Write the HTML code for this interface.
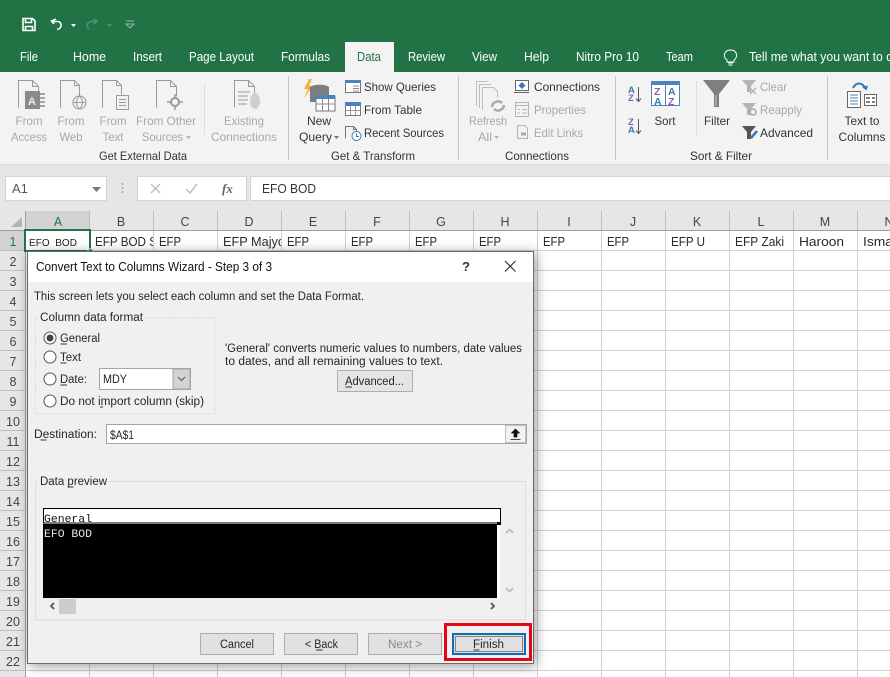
<!DOCTYPE html>
<html><head><meta charset="utf-8"><style>
html,body{margin:0;padding:0;background:#fff;width:890px;height:677px;overflow:hidden}
svg{display:block}
text{font-family:"Liberation Sans",sans-serif;font-size:12px;fill:#333;white-space:pre}
.tab{font-size:12.5px;fill:#fff}
.dis{fill:#a8a8a8}
.c{text-anchor:middle}
.h{fill:#444;font-size:12.5px}
.cell{font-size:12.5px;fill:#2a2a2a}
.d{fill:#262626;font-size:11.5px}
.ic{fill:none;stroke:#9a9a9a;stroke-width:1}
</style></head><body>
<svg width="890" height="677" viewBox="0 0 890 677" xmlns="http://www.w3.org/2000/svg">
<defs>
<filter id="sh" x="-10%" y="-10%" width="120%" height="120%"><feDropShadow dx="2" dy="2" stdDeviation="6" flood-color="#000" flood-opacity=".4"/></filter>
<clipPath id="cb"><rect x="90" y="231" width="63" height="19"/></clipPath>
<clipPath id="cd"><rect x="218" y="231" width="63" height="19"/></clipPath>
<clipPath id="gn"><rect x="43" y="510" width="454" height="12"/></clipPath>
</defs>

<!-- title and tabs -->
<rect width="890" height="72" fill="#217346"/>
<g fill="none" stroke="#fff" stroke-width="1.6">
<path d="M23 18.500h9.500l2.500 2.500v9.500H23z"/><path d="M25.500 18.500v4h6v-4M25.500 30.500v-4h7v4"/>
<path d="M54 24l-2.500-3 4.500-2M52 21.500h6c4 0 4.500 7.500-1 8"/>
</g>
<path d="M71 24h5l-2.500 3z" fill="#fff"/>
<path d="M94 24l3-3-4-2M96 21.500h-4c-3 0-5 2-5 4s1 3 2 4" fill="none" stroke="#4e9170" stroke-width="1.500"/>
<path d="M107 24h5l-2.500 3z" fill="#4e9170"/>
<path d="M126 21h8M126 24h8l-4 4z" fill="none" stroke="#8fb9a3" stroke-width="1"/>

<rect x="345" y="42" width="49" height="30" fill="#f3f3f3"/>
<text class="tab" x="20" y="61" textLength="18" lengthAdjust="spacingAndGlyphs">File</text>
<text class="tab" x="73" y="61" textLength="33" lengthAdjust="spacingAndGlyphs">Home</text>
<text class="tab" x="133" y="61" textLength="29" lengthAdjust="spacingAndGlyphs">Insert</text>
<text class="tab" x="189" y="61" textLength="65" lengthAdjust="spacingAndGlyphs">Page Layout</text>
<text class="tab" x="281" y="61" textLength="49" lengthAdjust="spacingAndGlyphs">Formulas</text>
<text class="tab" x="357" y="61" textLength="24" lengthAdjust="spacingAndGlyphs" style="fill:#217346">Data</text>
<text class="tab" x="408" y="61" textLength="37" lengthAdjust="spacingAndGlyphs">Review</text>
<text class="tab" x="472" y="61" textLength="25" lengthAdjust="spacingAndGlyphs">View</text>
<text class="tab" x="524" y="61" textLength="25" lengthAdjust="spacingAndGlyphs">Help</text>
<text class="tab" x="576" y="61" textLength="63" lengthAdjust="spacingAndGlyphs">Nitro Pro 10</text>
<text class="tab" x="666" y="61" textLength="27" lengthAdjust="spacingAndGlyphs">Team</text>
<path d="M728 63h5M728.500 65h4M727 60c-4.500-3-3-10 3.500-10s8 7 3.500 10v2h-7z" fill="none" stroke="#fff" stroke-width="1"/>
<text class="tab" x="749" y="61" textLength="144" lengthAdjust="spacingAndGlyphs">Tell me what you want to d</text>

<!-- ribbon -->
<rect y="72" width="890" height="92" fill="#f3f3f3"/>
<rect y="164" width="890" height="47" fill="#e6e6e6"/>
<rect y="164" width="890" height="1" fill="#dcdcdc"/>
<g fill="#c6c6c6">
<rect x="288" y="76" width="1" height="84"/><rect x="458" y="76" width="1" height="84"/>
<rect x="615" y="76" width="1" height="84"/><rect x="827" y="76" width="1" height="84"/>
<rect x="204" y="83" width="1" height="52" fill="#dedede"/><rect x="696" y="81" width="1" height="55" fill="#dedede"/>
</g>

<!-- ribbon icons: external data -->
<g class="ic">
<path d="M18.500 107.500V80.500h14l6 6v21"/><path d="M32.500 80.500v6h6"/>
<path d="M60.500 107.500V80.500h14l5 5v10"/><path d="M74.500 80.500v5h5"/><circle cx="79.500" cy="102.500" r="6.500"/><path d="M73 102.500h13M79.500 96c-4 4-4 9 0 13M79.500 96c4 4 4 9 0 13"/>
<path d="M102.500 107.500V80.500h14l5 5v9"/><path d="M116.500 80.500v5h5"/><rect x="116.500" y="95.500" width="12" height="14"/><path d="M119 99.500h7M119 102.500h7M119 105.500h7"/>
<path d="M156.500 107.500V80.500h14l6 6v10"/><path d="M170.500 80.500v6h6"/><circle cx="175" cy="102" r="4" stroke-width="2"/><path d="M175 94v4M175 106v4M167 102h4M179 102h4" stroke-width="1.500"/>
<path d="M234.500 107.500V80.500h14l6 6v8"/><path d="M248.500 80.500v6h6M238 92h12M238 96h10M238 100h10M238 104h9"/>
</g>
<rect x="25" y="91" width="15" height="18" fill="#8a8a8a"/><text x="28" y="105" style="font-size:11px;font-weight:bold;fill:#eee">A</text>
<path d="M40 94h5M40 98h5M40 102h5M40 106h5" stroke="#8a8a8a" stroke-width="1.500" fill="none"/>
<ellipse cx="255" cy="101" rx="5" ry="8" fill="#cfcfcf"/>

<text class="dis c" x="29" y="125" textLength="27" lengthAdjust="spacingAndGlyphs">From</text><text class="dis c" x="29" y="141" textLength="36" lengthAdjust="spacingAndGlyphs">Access</text>
<text class="dis c" x="71" y="125" textLength="27" lengthAdjust="spacingAndGlyphs">From</text><text class="dis c" x="71" y="141" textLength="23" lengthAdjust="spacingAndGlyphs">Web</text>
<text class="dis c" x="113" y="125" textLength="27" lengthAdjust="spacingAndGlyphs">From</text><text class="dis c" x="113" y="141" textLength="21" lengthAdjust="spacingAndGlyphs">Text</text>
<text class="dis c" x="166" y="125" textLength="60" lengthAdjust="spacingAndGlyphs">From Other</text><text class="dis" x="142" y="141" textLength="41" lengthAdjust="spacingAndGlyphs">Sources</text>
<text class="dis c" x="244" y="125" textLength="40" lengthAdjust="spacingAndGlyphs">Existing</text><text class="dis c" x="244" y="141" textLength="66" lengthAdjust="spacingAndGlyphs">Connections</text>
<path d="M186 136h5l-2.500 3z" fill="#b4b4b4"/>
<text x="99" y="160" textLength="88" lengthAdjust="spacingAndGlyphs">Get External Data</text>

<!-- get and transform -->
<path d="M309 79l-5 10h4l-4 9 9-12h-4l3-7z" fill="#f2b33d"/>
<path d="M310 87c3-3 16-3 19 0v15h-19z" fill="#7d7d7d"/>
<rect x="316" y="96" width="19" height="15" fill="#fff" stroke="#777"/>
<rect x="316" y="95" width="19" height="4" fill="#4f81bd"/>
<path d="M322.500 99v12M328.500 99v12M316 104h19" stroke="#888" fill="none"/>
<text class="c" x="319" y="125" textLength="24" lengthAdjust="spacingAndGlyphs">New</text>
<text x="299" y="141" textLength="33" lengthAdjust="spacingAndGlyphs">Query</text>
<path d="M334 136h5l-2.500 3z" fill="#777"/>
<rect x="345.500" y="80.500" width="15" height="12" fill="#fff" stroke="#777"/><rect x="345" y="80" width="16" height="3" fill="#4f81bd"/><path d="M353 86h6M353 88.500h6M353 91h6" stroke="#888"/>
<rect x="345.500" y="103.500" width="15" height="12" fill="#fff" stroke="#777"/><rect x="345" y="102" width="16" height="4" fill="#4f81bd"/><path d="M350.500 106v9M355.500 106v9M346 110.500h14" stroke="#999"/>
<path d="M345.500 138.500v-12h8l3 3v3M353.500 126.500v3h3" fill="none" stroke="#777"/><circle cx="356.500" cy="136" r="4.500" fill="#fff" stroke="#3a78b5"/><path d="M356.500 133.500v3h2.500" stroke="#3a78b5" fill="none"/>
<text x="364" y="91" textLength="72" lengthAdjust="spacingAndGlyphs">Show Queries</text>
<text x="364" y="114" textLength="58" lengthAdjust="spacingAndGlyphs">From Table</text>
<text x="364" y="137" textLength="80" lengthAdjust="spacingAndGlyphs">Recent Sources</text>
<text x="331" y="160" textLength="84" lengthAdjust="spacingAndGlyphs">Get &amp; Transform</text>

<!-- connections -->
<g class="ic" style="stroke:#bdbdbd">
<path d="M476.500 106V81.500h12M479.500 108V84.500h12M482.500 110V87.500h11l4 4v6"/>
</g>
<path d="M492 107a6 6 0 0 1 10-4M504 105a6 6 0 0 1-10 4" fill="none" stroke="#aaa" stroke-width="2.500"/>
<text class="dis c" x="488" y="125" textLength="38" lengthAdjust="spacingAndGlyphs">Refresh</text>
<text class="dis" x="478" y="141" textLength="14" lengthAdjust="spacingAndGlyphs">All</text>
<path d="M494 136h5l-2.500 3z" fill="#b4b4b4"/>
<rect x="515.500" y="80.500" width="13" height="10" fill="#fff" stroke="#666"/><path d="M514 92.500h15" stroke="#666"/><path d="M522 82l3.500 3.500-3.500 3.500-3.500-3.500z" fill="#3a78b5"/>
<rect x="515.500" y="102.500" width="13" height="14" fill="none" stroke="#b5b5b5"/><path d="M515 105.500h14M518 109.500h2M518 113h2M522 109.500h5M522 113h5" stroke="#b5b5b5"/>
<path d="M517.500 138.500v-13h7l3 3v10z" fill="none" stroke="#b5b5b5"/><path d="M521 134h5" stroke="#aaa" stroke-width="3"/>
<text x="534" y="91" textLength="66" lengthAdjust="spacingAndGlyphs">Connections</text>
<text class="dis" x="534" y="114" textLength="52" lengthAdjust="spacingAndGlyphs">Properties</text>
<text class="dis" x="534" y="137" textLength="49" lengthAdjust="spacingAndGlyphs">Edit Links</text>
<text x="505" y="160" textLength="64" lengthAdjust="spacingAndGlyphs">Connections</text>

<!-- sort -->
<g style="font-weight:bold">
<text x="628" y="93" style="font-size:9.500px;fill:#3a78b5">A</text><text x="628" y="101" style="font-size:9.500px;fill:#8e5ea8">Z</text>
<text x="628" y="125" style="font-size:9.500px;fill:#8e5ea8">Z</text><text x="628" y="133" style="font-size:9.500px;fill:#3a78b5">A</text>
</g>
<path d="M638.500 87v14M636 98.500l2.500 3 2.500-3M638.500 119v14M636 130.500l2.500 3 2.500-3" fill="none" stroke="#555"/>
<rect x="651.500" y="82.500" width="28" height="23" fill="#fff" stroke="#4f81bd"/><rect x="651" y="81" width="29" height="4" fill="#4f81bd"/><path d="M665.500 85v20" stroke="#4f81bd"/>
<g style="font-weight:bold">
<text x="654" y="95" style="font-size:10.500px;fill:#8e5ea8">Z</text><text x="654" y="105" style="font-size:10.500px;fill:#3a78b5">A</text>
<text x="668" y="95" style="font-size:10.500px;fill:#3a78b5">A</text><text x="668" y="105" style="font-size:10.500px;fill:#8e5ea8">Z</text>
</g>
<text class="c" x="665" y="125" textLength="21" lengthAdjust="spacingAndGlyphs">Sort</text>
<path d="M703 80h27l-11 14v13h-5V94z" fill="#7f7f7f"/><path d="M716 95v11" stroke="#b5b5b5" stroke-width="1.500"/>
<text class="c" x="717" y="125" textLength="26" lengthAdjust="spacingAndGlyphs">Filter</text>
<path d="M742 80h14l-5 6v6h-4v-6z" fill="#b4b4b4"/><path d="M750 88l6 6M756 88l-6 6" stroke="#b4b4b4" stroke-width="1.500"/>
<path d="M742 103h14l-5 6v6h-4v-6z" fill="#b4b4b4"/><circle cx="753" cy="112" r="3" fill="none" stroke="#a8a8a8" stroke-width="1.500"/>
<path d="M742 126h14l-5 6v7h-4v-7z" fill="#555"/><path d="M751 138l6-7" stroke="#3a78b5" stroke-width="2.500"/>
<text class="dis" x="760" y="91" textLength="27" lengthAdjust="spacingAndGlyphs">Clear</text>
<text class="dis" x="760" y="114" textLength="42" lengthAdjust="spacingAndGlyphs">Reapply</text>
<text x="760" y="137" textLength="53" lengthAdjust="spacingAndGlyphs">Advanced</text>
<text x="690" y="160" textLength="62" lengthAdjust="spacingAndGlyphs">Sort &amp; Filter</text>

<!-- text to columns -->
<rect x="847.500" y="91.500" width="13" height="16" fill="#fff" stroke="#666"/><path d="M850 95h8M850 98h8M850 101h8M850 104h8" stroke="#4f81bd"/>
<rect x="864.500" y="94.500" width="12" height="11" fill="#fff" stroke="#666"/><path d="M866 98h4M866 102h4M872 98h3M872 102h3" stroke="#555" stroke-width="1.500"/>
<path d="M853 88c3-6 9-6 12 0" fill="none" stroke="#3a78b5" stroke-width="2"/><path d="M862 87l4.500 3.500 1.500-5z" fill="#3a78b5"/>
<text class="c" x="862" y="125" textLength="35" lengthAdjust="spacingAndGlyphs">Text to</text>
<text class="c" x="862" y="141" textLength="47" lengthAdjust="spacingAndGlyphs">Columns</text>

<!-- formula bar -->
<rect x="5.500" y="176.500" width="101" height="24" fill="#fff" stroke="#d4d4d4"/>
<text x="12" y="193" style="font-size:13px;fill:#555">A1</text>
<path d="M92 187h9l-4.500 5z" fill="#777"/>
<path d="M122.500 183v2M122.500 187v2M122.500 191v2" stroke="#aaa" stroke-width="1.500"/>
<rect x="137.500" y="176.500" width="109" height="24" fill="#fff" stroke="#d4d4d4"/>
<path d="M151 184l9 9M160 184l-9 9" stroke="#bdbdbd" stroke-width="1.500"/>
<path d="M186 189l4 4 7-9" fill="none" stroke="#bdbdbd" stroke-width="1.500"/>
<text x="222" y="193" style="font-size:13px;font-style:italic;font-family:'Liberation Serif',serif;font-weight:bold;fill:#666">fx</text>
<rect x="250.500" y="176.500" width="650" height="24" fill="#fff" stroke="#d4d4d4"/>
<text x="262" y="193" textLength="54" lengthAdjust="spacingAndGlyphs" style="font-size:12.500px">EFO BOD</text>

<!-- headers and grid -->
<rect y="211" width="890" height="20" fill="#e6e6e6"/>
<rect y="231" width="25" height="446" fill="#e6e6e6"/>
<rect x="26" y="211" width="64" height="20" fill="#d2d2d2"/>
<rect y="231" width="25" height="20" fill="#d2d2d2"/>
<path d="M22 217v10H11z" fill="#b5b5b5"/>
<path d="M89.500 211v20M153.500 211v20M217.500 211v20M281.500 211v20M345.500 211v20M409.500 211v20M473.500 211v20M537.500 211v20M601.500 211v20M665.500 211v20M729.500 211v20M793.500 211v20M857.500 211v20" stroke="#bdbdbd"/>
<path d="M0 230.500h890M25.500 211v466" stroke="#9f9f9f"/>
<path d="M89.500 231V677M153.500 231V677M217.500 231V677M281.500 231V677M345.500 231V677M409.500 231V677M473.500 231V677M537.500 231V677M601.500 231V677M665.500 231V677M729.500 231V677M793.500 231V677M857.500 231V677M25 250.500H890M25 270.500H890M25 290.500H890M25 310.500H890M25 330.500H890M25 350.500H890M25 370.500H890M25 390.500H890M25 410.500H890M25 430.500H890M25 450.500H890M25 470.500H890M25 490.500H890M25 510.500H890M25 530.500H890M25 550.500H890M25 570.500H890M25 590.500H890M25 610.500H890M25 630.500H890M25 650.500H890M25 670.500H890" stroke="#d0d0d0"/>
<path d="M0 250.500h25M0 270.500h25M0 290.500h25M0 310.500h25M0 330.500h25M0 350.500h25M0 370.500h25M0 390.500h25M0 410.500h25M0 430.500h25M0 450.500h25M0 470.500h25M0 490.500h25M0 510.500h25M0 530.500h25M0 550.500h25M0 570.500h25M0 590.500h25M0 610.500h25M0 630.500h25M0 650.500h25M0 670.500h25" stroke="#bdbdbd"/>

<text class="h c" x="58" y="226" style="fill:#217346">A</text>
<text class="h c" x="121" y="226">B</text><text class="h c" x="185" y="226">C</text><text class="h c" x="249" y="226">D</text><text class="h c" x="313" y="226">E</text><text class="h c" x="377" y="226">F</text><text class="h c" x="441" y="226">G</text><text class="h c" x="505" y="226">H</text><text class="h c" x="569" y="226">I</text><text class="h c" x="633" y="226">J</text><text class="h c" x="697" y="226">K</text><text class="h c" x="761" y="226">L</text><text class="h c" x="825" y="226">M</text><text class="h c" x="889" y="226">N</text>

<g>
<text class="h c" x="13" y="246" style="fill:#217346">1</text><text class="h c" x="13" y="266">2</text><text class="h c" x="13" y="286">3</text><text class="h c" x="13" y="306">4</text><text class="h c" x="13" y="326">5</text><text class="h c" x="13" y="346">6</text><text class="h c" x="13" y="366">7</text><text class="h c" x="13" y="386">8</text><text class="h c" x="13" y="406">9</text><text class="h c" x="13" y="426">10</text><text class="h c" x="13" y="446">11</text><text class="h c" x="13" y="466">12</text><text class="h c" x="13" y="486">13</text><text class="h c" x="13" y="506">14</text><text class="h c" x="13" y="526">15</text><text class="h c" x="13" y="546">16</text><text class="h c" x="13" y="566">17</text><text class="h c" x="13" y="586">18</text><text class="h c" x="13" y="606">19</text><text class="h c" x="13" y="626">20</text><text class="h c" x="13" y="646">21</text><text class="h c" x="13" y="666">22</text>
</g>

<!-- row one -->
<text x="29" y="246" textLength="48" lengthAdjust="spacingAndGlyphs" style="font-size:10.500px;fill:#222">EFO  BOD</text>
<rect x="25" y="230" width="65" height="21" fill="none" stroke="#217346" stroke-width="2"/>
<rect x="88" y="249" width="5" height="5" fill="#217346" stroke="#fff"/>
<g clip-path="url(#cb)"><text class="cell" x="95" y="246" textLength="62" lengthAdjust="spacingAndGlyphs">EFP BOD S</text></g>
<text class="cell" x="159" y="246" textLength="22" lengthAdjust="spacingAndGlyphs">EFP</text>
<g clip-path="url(#cd)"><text class="cell" x="223" y="246" textLength="62" lengthAdjust="spacingAndGlyphs">EFP Majyd</text></g>
<text class="cell" x="287" y="246" textLength="22" lengthAdjust="spacingAndGlyphs">EFP</text>
<text class="cell" x="351" y="246" textLength="22" lengthAdjust="spacingAndGlyphs">EFP</text>
<text class="cell" x="415" y="246" textLength="22" lengthAdjust="spacingAndGlyphs">EFP</text>
<text class="cell" x="479" y="246" textLength="22" lengthAdjust="spacingAndGlyphs">EFP</text>
<text class="cell" x="543" y="246" textLength="22" lengthAdjust="spacingAndGlyphs">EFP</text>
<text class="cell" x="607" y="246" textLength="22" lengthAdjust="spacingAndGlyphs">EFP</text>
<text class="cell" x="671" y="246" textLength="34" lengthAdjust="spacingAndGlyphs">EFP U</text>
<text class="cell" x="735" y="246" textLength="49" lengthAdjust="spacingAndGlyphs">EFP Zaki</text>
<text class="cell" x="799" y="246" textLength="45" lengthAdjust="spacingAndGlyphs">Haroon</text>
<text class="cell" x="863" y="246" textLength="30" lengthAdjust="spacingAndGlyphs">Isma</text>

<!-- dialog -->
<rect x="27.500" y="251.500" width="506" height="412" fill="#f0f0f0" stroke="#6a6a6a" filter="url(#sh)"/>
<rect x="28" y="252" width="505" height="30" fill="#fff"/>
<text x="36" y="271" textLength="236" lengthAdjust="spacingAndGlyphs" style="font-size:12.500px;fill:#111">Convert Text to Columns Wizard - Step 3 of 3</text>
<text x="462" y="271" style="font-size:13px;fill:#333;font-weight:bold">?</text>
<path d="M505 261l10.500 10.500M515.500 261L505 271.500" stroke="#222" stroke-width="1"/>
<text class="d" x="34" y="300" textLength="330" lengthAdjust="spacingAndGlyphs">This screen lets you select each column and set the Data Format.</text>

<!-- format group -->
<path d="M38 317.500h-2.500v96.500h179.500v-96.500H145" fill="none" stroke="#dcdcdc" stroke-dasharray="2 1"/>
<text class="d" x="40" y="321" textLength="103" lengthAdjust="spacingAndGlyphs">Column data format</text>
<g fill="#fff" stroke="#555" stroke-width="1">
<circle cx="50" cy="338" r="6"/><circle cx="50" cy="357" r="6"/><circle cx="50" cy="379" r="6"/><circle cx="50" cy="401" r="6"/>
</g>
<circle cx="50" cy="338" r="3.500" fill="#444"/>
<text class="d" x="60" y="342" textLength="40" lengthAdjust="spacingAndGlyphs">General</text><path d="M60.500 344h6.500" stroke="#333"/>
<text class="d" x="60" y="361" textLength="21" lengthAdjust="spacingAndGlyphs">Text</text><path d="M60.500 363h6" stroke="#333"/>
<text class="d" x="60" y="383" textLength="27" lengthAdjust="spacingAndGlyphs">Date:</text><path d="M60.500 385h6.500" stroke="#333"/>
<text class="d" x="60" y="405" textLength="144" lengthAdjust="spacingAndGlyphs">Do not import column (skip)</text><path d="M100 407h3" stroke="#333"/>
<rect x="99.500" y="368.500" width="91" height="21" fill="#fff" stroke="#a5a5a5"/>
<rect x="173" y="369" width="17" height="20" fill="#d3d3d3" stroke="#a5a5a5"/>
<path d="M178 377l3.500 3.500 3.500-3.500" fill="none" stroke="#555"/>
<text class="d" x="103" y="383" textLength="24" lengthAdjust="spacingAndGlyphs">MDY</text>

<text class="d" x="225" y="352" textLength="297" lengthAdjust="spacingAndGlyphs">'General' converts numeric values to numbers, date values</text>
<text class="d" x="225" y="365" textLength="218" lengthAdjust="spacingAndGlyphs">to dates, and all remaining values to text.</text>
<rect x="337.500" y="370.500" width="75" height="21" fill="#e4e4e4" stroke="#adadad"/>
<text class="d" x="345" y="385" textLength="59" lengthAdjust="spacingAndGlyphs">Advanced...</text><path d="M345.500 387h6.500" stroke="#333"/>

<!-- destination -->
<text class="d" x="34" y="438" textLength="63" lengthAdjust="spacingAndGlyphs">Destination:</text><path d="M40.500 440h6" stroke="#333"/>
<rect x="106.500" y="424.500" width="420" height="19" fill="#fff" stroke="#a5a5a5"/>
<text class="d" x="110" y="439" textLength="24" lengthAdjust="spacingAndGlyphs">$A$1</text>
<rect x="505.500" y="425.500" width="20" height="17" fill="#f2f2f2" stroke="#c0c0c0"/>
<path d="M515.500 429l4 4h-2.500v4h-3v-4h-2.500zM510.500 439.500h10" fill="#111" stroke="#111" stroke-width=".7"/>

<!-- preview -->
<path d="M38 481.500h-2.500v138.500h490V481.500H108" fill="none" stroke="#dcdcdc"/>
<text class="d" x="40" y="485" textLength="67" lengthAdjust="spacingAndGlyphs">Data preview</text><path d="M67.500 487h6" stroke="#333"/>
<rect x="43.500" y="508.500" width="457" height="14.500" fill="#fff" stroke="#000"/>
<g clip-path="url(#gn)"><text x="44" y="522" textLength="48" lengthAdjust="spacingAndGlyphs" style="font-family:'Liberation Mono',monospace;font-size:11px;fill:#111">General</text></g>
<rect x="43" y="524" width="454" height="74" fill="#000"/>
<rect x="497" y="524" width="3" height="74" fill="#fff"/>
<rect x="497" y="522" width="4" height="3" fill="#000"/>
<text x="44" y="537" textLength="48" lengthAdjust="spacingAndGlyphs" style="font-family:'Liberation Mono',monospace;font-size:11px;fill:#e8e8e8">EFO BOD</text>
<path d="M506 533l3.500-3.500 3.500 3.500M506 588l3.500 3.500 3.500-3.500" fill="none" stroke="#bdbdbd" stroke-width="1.700"/>
<path d="M54 603l-3 3 3 3M491 603l3 3-3 3" fill="none" stroke="#555" stroke-width="1.800"/>
<rect x="59" y="599" width="17" height="15" fill="#cdcdcd"/>

<!-- buttons -->
<g fill="#e1e1e1" stroke="#adadad">
<rect x="200.500" y="633.500" width="73" height="21"/><rect x="284.500" y="633.500" width="73" height="21"/><rect x="368.500" y="633.500" width="73" height="21"/>
</g>
<text class="d" x="220" y="648" textLength="34" lengthAdjust="spacingAndGlyphs">Cancel</text>
<text class="d" x="305" y="648" textLength="33" lengthAdjust="spacingAndGlyphs">&lt; Back</text><path d="M316 650h6.500" stroke="#333"/>
<text class="d" x="388" y="648" textLength="34" lengthAdjust="spacingAndGlyphs" style="fill:#8a8a8a">Next &gt;</text>
<rect x="453" y="634" width="72" height="20" fill="#e1e1e1" stroke="#0f6cbd" stroke-width="2"/>
<rect x="455.500" y="636.500" width="67" height="15" fill="none" stroke="#222" stroke-dasharray="1 1"/>
<text class="d" x="473" y="648" textLength="31" lengthAdjust="spacingAndGlyphs">Finish</text><path d="M473.500 650h6" stroke="#333"/>
<rect x="445.500" y="624.500" width="85" height="35" fill="none" stroke="#e30613" stroke-width="3"/>
</svg>
</body></html>
